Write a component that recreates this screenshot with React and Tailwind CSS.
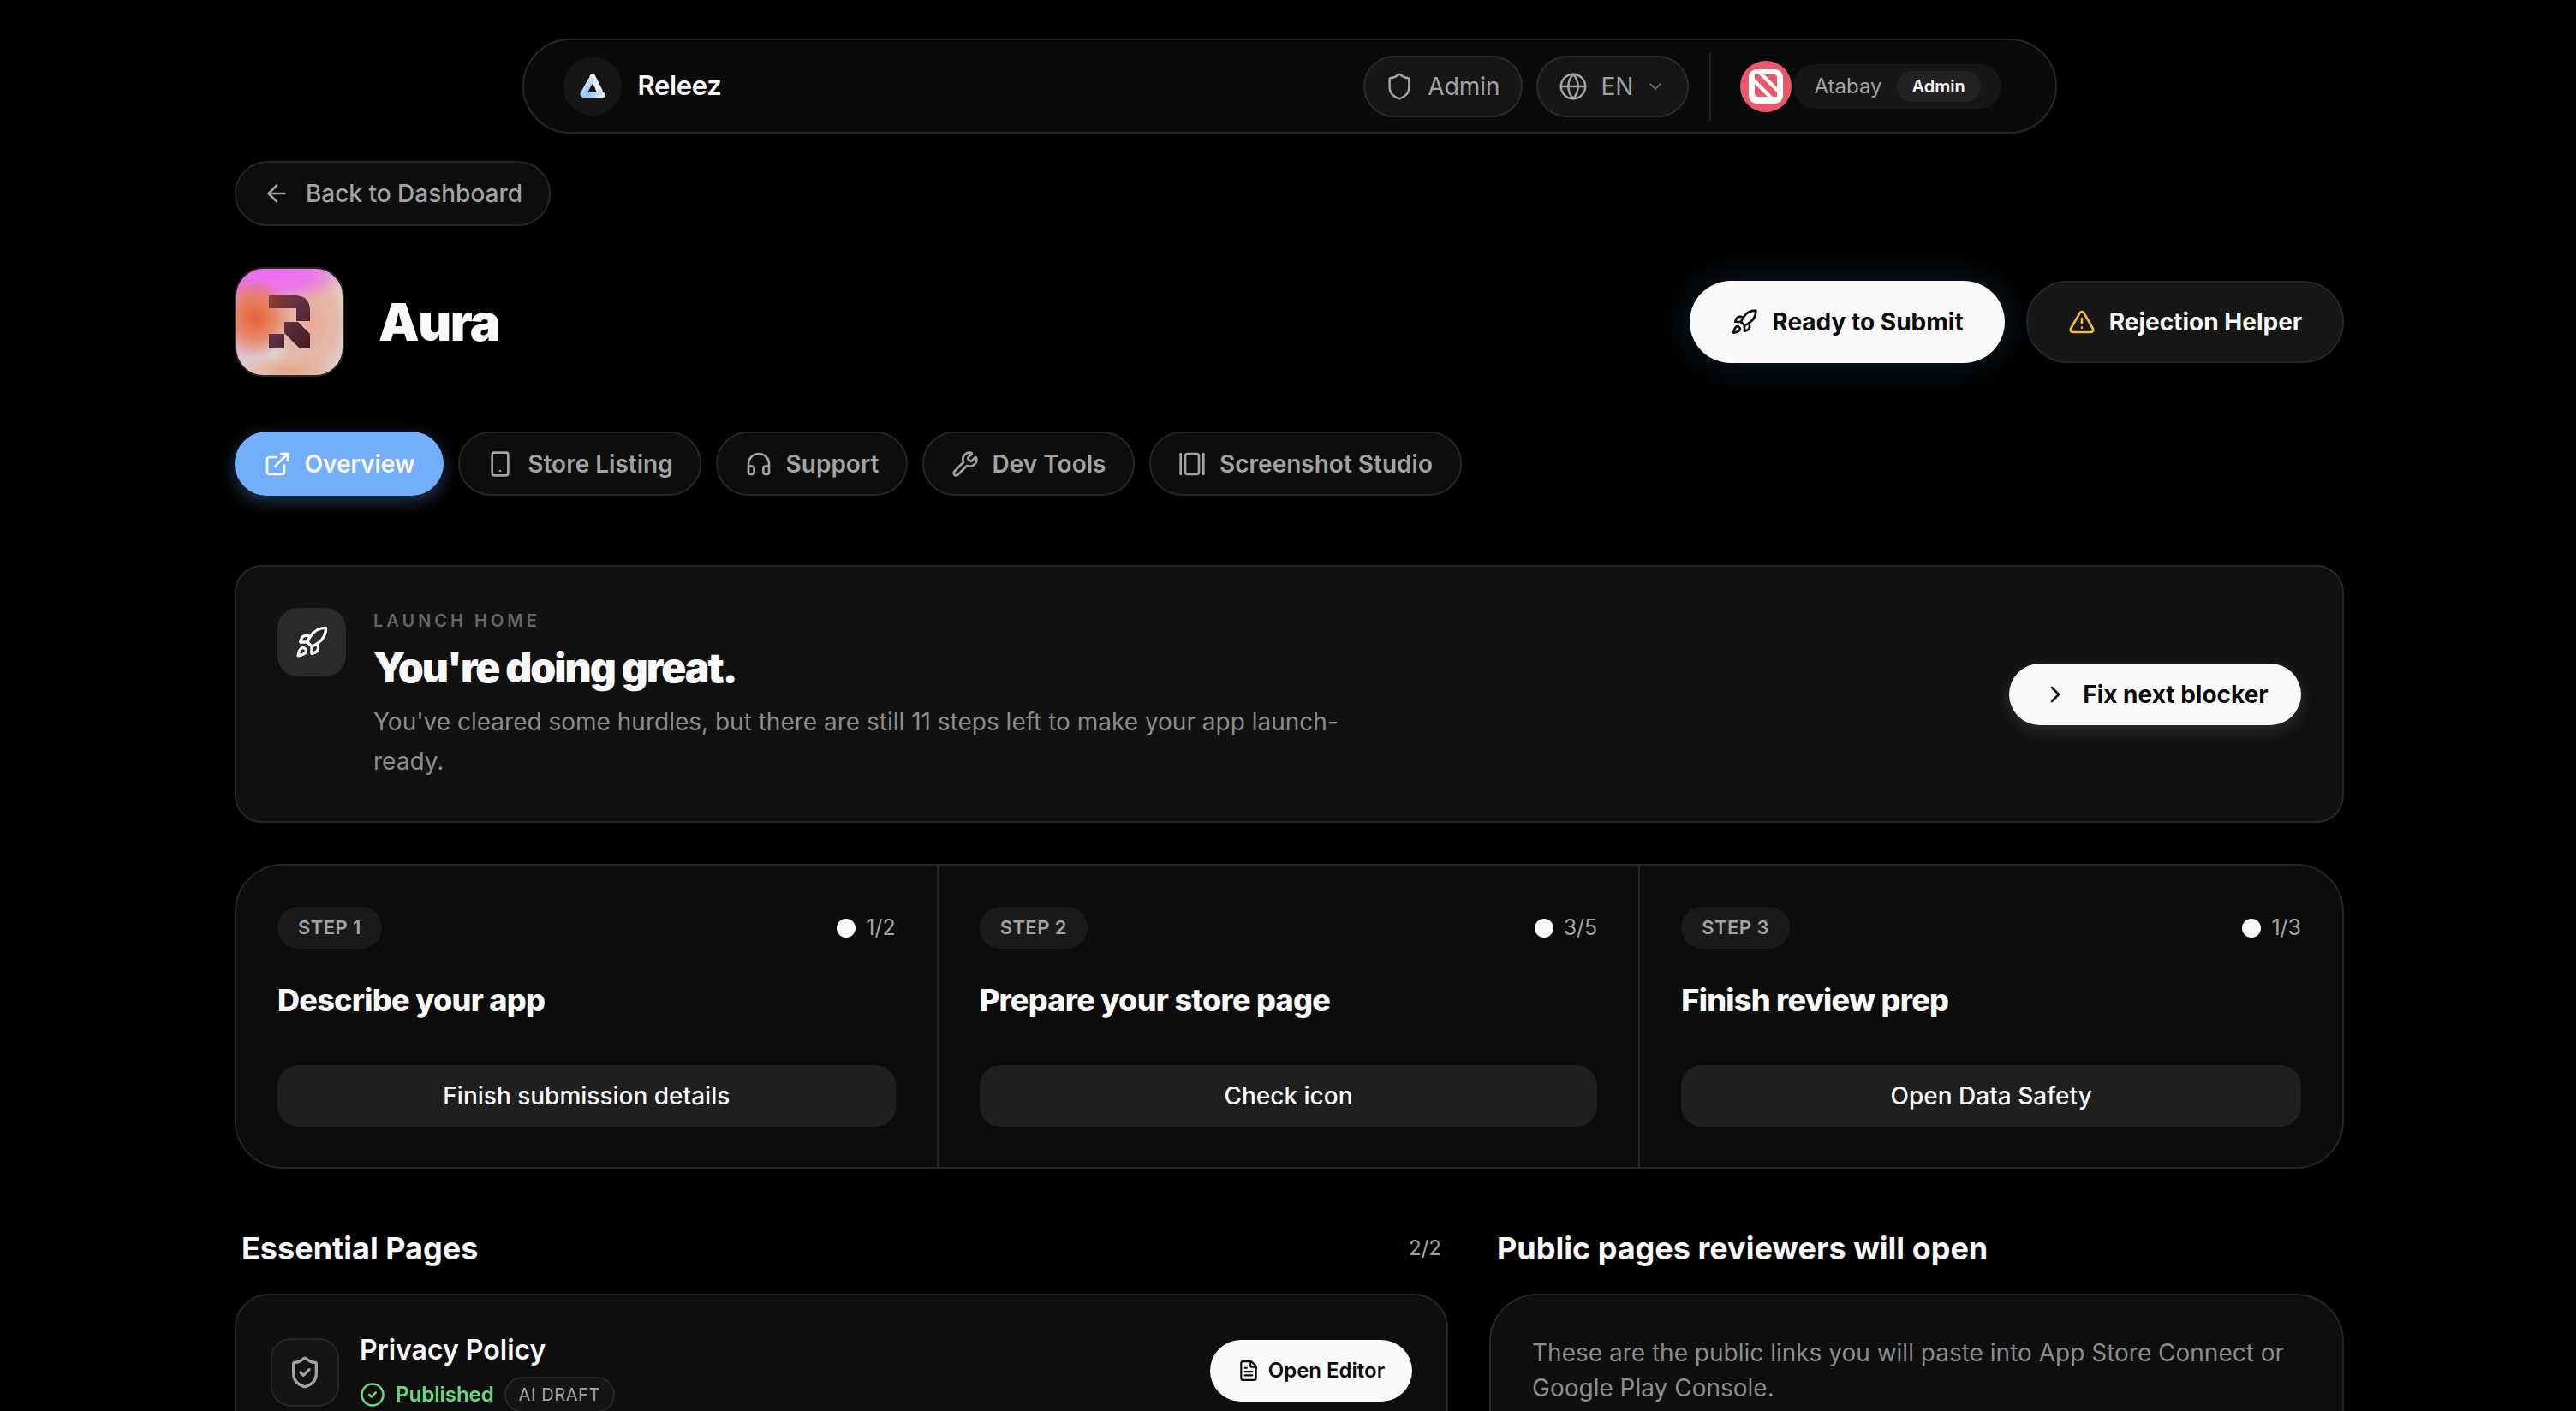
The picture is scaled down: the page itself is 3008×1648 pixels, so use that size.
import {
  ArrowLeft,
  ChevronDown,
  ChevronRight,
  CircleCheck,
  ExternalLink,
  FileText,
  GalleryHorizontal,
  Globe,
  Headphones,
  Rocket,
  Shield,
  ShieldCheck,
  Smartphone,
  TriangleAlert,
  Wrench,
} from 'lucide-react';

const TABS = [
  ['Store Listing', Smartphone, 'w-[284px]'],
  ['Support', Headphones, 'w-[224px]'],
  ['Dev Tools', Wrench, 'w-[248px]'],
  ['Screenshot Studio', GalleryHorizontal, 'w-[365px]'],
];

const STEPS = [
  ['STEP 1', '1/2', 'Describe your app', 'Finish submission details'],
  ['STEP 2', '3/5', 'Prepare your store page', 'Check icon'],
  ['STEP 3', '1/3', 'Finish review prep', 'Open Data Safety'],
];

function ReleezLogo() {
  return (
    <svg width="32" height="30" viewBox="0 0 32 30" fill="none">
      <defs>
        <linearGradient id="rl" gradientUnits="userSpaceOnUse" x1="4" y1="2" x2="30" y2="28">
          <stop offset="0" stopColor="#ffffff" />
          <stop offset="0.55" stopColor="#8fc2ff" />
          <stop offset="1" stopColor="#eef5ff" />
        </linearGradient>
      </defs>
      <path d="M16 4 L24 20" stroke="#e8f2ff" strokeWidth="7" strokeLinecap="round" />
      <path d="M14 8 L5 24" stroke="url(#rl)" strokeWidth="7" strokeLinecap="round" />
      <path d="M6 25 H28" stroke="url(#rl)" strokeWidth="6" strokeLinecap="round" />
      <circle cx="16" cy="18" r="3" fill="#161616" />
    </svg>
  );
}

function AppleNewsLogo() {
  return (
    <svg width="40" height="40" viewBox="0 0 40 40">
      <rect x="0" y="0" width="40" height="40" rx="9" fill="#fff" />
      <path d="M7 6 L12 6 L33 27 L33 32 L28 32 L7 11 Z M18 6 L29 6 Q33 6 33 10 L33 21 Z M7 17 L22 32 L11 32 Q7 32 7 28 Z" fill="#e85a6b" />
    </svg>
  );
}

function AuraIcon() {
  return (
    <div className="w-[128px] h-[128px] shrink-0 rounded-[34px] border-2 border-[#2a2a2a] overflow-hidden flex items-center justify-center bg-[radial-gradient(ellipse_34%_38%_at_18%_46%,#e8633a_0%,rgba(232,120,70,0.75)_55%,rgba(232,140,90,0)_100%),radial-gradient(ellipse_75%_30%_at_30%_4%,#ec6ff0_0%,rgba(236,111,240,0.85)_55%,rgba(236,120,240,0)_100%),radial-gradient(ellipse_40%_60%_at_70%_50%,#e8ac98_0%,rgba(232,172,152,0.7)_60%,rgba(232,172,152,0)_100%),radial-gradient(ellipse_50%_18%_at_50%_96%,#e8a080_0%,rgba(232,160,128,0)_100%),linear-gradient(135deg,#e58fd8_0%,#dcd6d4_60%,#dcd8d6_100%)]">
      <svg width="52" height="66" viewBox="0 0 52 66">
        <defs>
          <linearGradient id="auraR" x1="0" y1="0" x2="1" y2="1">
            <stop offset="0" stopColor="#8d3f2c" />
            <stop offset="0.45" stopColor="#5f3040" />
            <stop offset="1" stopColor="#471b1e" />
          </linearGradient>
        </defs>
        <path
          d="M2 2 H32 Q50 2 50 20 V32 H34 V17 H2 Z M20 33 H36 L50 47 V64 H38 L20 46 Z M2 47 H20 V64 H2 Z"
          fill="url(#auraR)"
        />
      </svg>
    </div>
  );
}

function Topbar() {
  return (
    <div className="self-center w-[1792px] h-[111px] mt-[45px] shrink-0 rounded-full border-2 border-[#262626] bg-[#0a0a0a] flex items-center justify-between pl-[46px] pr-[63px]">
      <div className="flex items-center gap-[19px]">
        <div className="w-[68px] h-[68px] rounded-full bg-[#161616] flex items-center justify-center">
          <ReleezLogo />
        </div>
        <span className="text-[31px] font-semibold tracking-[-0.01em] text-[#fafafa]">Releez</span>
      </div>
      <div className="flex items-center">
        <div className="h-[72px] w-[186px] rounded-full border-2 border-[#2a2a2a] bg-[#161616] flex items-center justify-center gap-[16px] text-[#a3a3a3] text-[28px]">
          <Shield size={34} strokeWidth={1.75} />
          <span>Admin</span>
        </div>
        <div className="h-[72px] w-[178px] ml-[16px] rounded-full border-2 border-[#2a2a2a] bg-[#161616] flex items-center justify-center text-[#a3a3a3] text-[28px]">
          <Globe size={34} strokeWidth={1.75} />
          <span className="ml-[16px]">EN</span>
          <ChevronDown size={24} strokeWidth={1.75} className="ml-[14px] text-[#737373]" />
        </div>
        <div className="w-[2px] h-[80px] bg-[#1f1f1f] ml-[24px] mr-[34px]" />
        <div className="w-[60px] h-[60px] rounded-full bg-[#e85a6b] flex items-center justify-center">
          <AppleNewsLogo />
        </div>
        <div className="h-[52px] w-[243px] ml-[2px] rounded-full bg-[#161616] flex items-center pl-[25px]">
          <span className="text-[24px] text-[#a3a3a3]">Atabay</span>
          <span className="ml-[17px] h-[36px] w-[98px] rounded-full bg-[#222222] flex items-center justify-center text-[20px] font-semibold text-[#fafafa]">Admin</span>
        </div>
      </div>
    </div>
  );
}

function AppHeader() {
  return (
    <div className="mt-[48px] flex items-center justify-between">
      <div className="flex items-center gap-[40px]">
        <AuraIcon />
        <h1 className="text-[60px] font-black text-[#fafafa] tracking-[-0.025em]">Aura</h1>
      </div>
      <div className="flex items-center gap-[25px]">
        <button className="h-[96px] w-[368px] rounded-full bg-[#fafafa] flex items-center justify-center gap-[16px] text-[#0a0a0a] text-[28px] font-bold shadow-[0_0_40px_rgba(96,165,250,0.18)]">
          <Rocket size={32} strokeWidth={2} />
          Ready to Submit
        </button>
        <button className="h-[96px] w-[371px] rounded-full bg-[#161616] border-2 border-[#262626] flex items-center justify-center gap-[16px] text-[#fafafa] text-[28px] font-bold">
          <TriangleAlert size={32} strokeWidth={2} className="text-[#f5b942]" />
          Rejection Helper
        </button>
      </div>
    </div>
  );
}

function Tabs() {
  return (
    <div className="mt-[64px] flex items-center gap-[17px]">
      <button className="h-[75px] w-[244px] rounded-full bg-[#73aefb] flex items-center justify-center gap-[16px] text-[#fafafa] text-[28px] font-semibold shadow-[0_6px_20px_rgba(96,165,250,0.35)]">
        <ExternalLink size={32} strokeWidth={2} />
        Overview
      </button>
      {TABS.map(([label, Icon, width]) => (
        <button
          key={label}
          className={`h-[75px] ${width} rounded-full bg-[#0d0d0d] border-2 border-[#262626] flex items-center justify-center gap-[16px] text-[#a3a3a3] text-[28px] font-semibold`}
        >
          <Icon size={32} strokeWidth={2} />
          {label}
        </button>
      ))}
    </div>
  );
}

function LaunchCard() {
  return (
    <div className="mt-[81px] h-[301px] rounded-[32px] border-2 border-[#262626] bg-[#111111] flex items-center justify-between pl-[48px] pr-[48px]">
      <div className="flex items-start gap-[32px] self-start pt-[48px]">
        <div className="w-[80px] h-[80px] rounded-[24px] bg-[#2a2a2a] flex items-center justify-center shrink-0 text-[#fafafa]">
          <Rocket size={40} strokeWidth={2} />
        </div>
        <div className="w-[1152px]">
          <p className="text-[20px] leading-[30px] font-semibold tracking-[0.2em] text-[#666666]">LAUNCH HOME</p>
          <h2 className="mt-[10px] text-[48px] leading-[60px] font-black tracking-[-0.04em] text-[#fafafa]">You're doing great.</h2>
          <p className="mt-[10px] text-[28px] leading-[46px] text-[#8c8c8c]">
            You've cleared some hurdles, but there are still 11 steps left to make your app launch-ready.
          </p>
        </div>
      </div>
      <button className="h-[72px] w-[341px] rounded-full bg-[#fafafa] flex items-center justify-center gap-[16px] text-[#0a0a0a] text-[28px] font-bold shadow-[0_6px_20px_rgba(255,255,255,0.12)]">
        <ChevronRight size={32} strokeWidth={2} />
        Fix next blocker
      </button>
    </div>
  );
}

function StepsCard() {
  return (
    <div className="mt-[48px] h-[356px] rounded-[56px] border-2 border-[#262626] bg-[#0c0c0c] grid grid-cols-3 divide-x-2 divide-[#262626] overflow-hidden">
      {STEPS.map(([step, count, title, action]) => (
        <div key={step} className="flex flex-col px-[48px] pt-[48px]">
          <div className="flex items-center justify-between">
            <span className="h-[49px] px-[24px] rounded-full bg-[#1a1a1a] flex items-center text-[22px] font-semibold tracking-[0.02em] text-[#a3a3a3]">{step}</span>
            <span className="flex items-center gap-[12px] text-[25px] text-[#a3a3a3]">
              <span className="w-[22px] h-[22px] rounded-full bg-[#fafafa]" />
              {count}
            </span>
          </div>
          <h3 className="mt-[36px] text-[36px] leading-[48px] font-extrabold tracking-[-0.02em] text-[#fafafa]">{title}</h3>
          <button className="mt-[52px] h-[72px] rounded-[24px] bg-[#1f1f1f] text-[28px] font-medium text-[#fafafa]">{action}</button>
        </div>
      ))}
    </div>
  );
}

function BottomSection() {
  return (
    <div className="mt-[67px] grid grid-cols-[1417px_998px] gap-x-[48px]">
      <div>
        <div className="flex items-center justify-between pl-[8px] pr-[8px] h-[52px]">
          <h2 className="text-[36px] font-bold text-[#fafafa]">Essential Pages</h2>
          <span className="text-[24px] text-[#a3a3a3]">2/2</span>
        </div>
        <div className="mt-[27px] h-[200px] rounded-[40px] border-2 border-[#262626] bg-[#0e0e0e] pl-[40px] pr-[40px] pt-[50px] flex items-start justify-between">
          <div className="flex items-start gap-[24px]">
            <div className="w-[80px] h-[80px] rounded-[24px] border-2 border-[#262626] bg-[#141414] flex items-center justify-center text-[#a3a3a3]">
              <ShieldCheck size={40} strokeWidth={2} />
            </div>
            <div className="-mt-[8px]">
              <p className="text-[32px] leading-[44px] font-semibold text-[#fafafa]">Privacy Policy</p>
              <div className="mt-[9px] flex items-center">
                <CircleCheck size={30} strokeWidth={2} className="text-[#6ad683]" />
                <span className="ml-[12px] text-[24px] font-semibold text-[#6ad683]">Published</span>
                <span className="ml-[12px] h-[42px] w-[129px] rounded-full border-2 border-[#262626] bg-[#141414] flex items-center justify-center text-[20px] tracking-[0.03em] text-[#a3a3a3]">AI DRAFT</span>
              </div>
            </div>
          </div>
          <button className="mt-[2px] h-[72px] w-[236px] rounded-full bg-[#fafafa] flex items-center justify-center gap-[10px] text-[#0a0a0a] text-[24px] font-semibold">
            <FileText size={26} strokeWidth={2} />
            Open Editor
          </button>
        </div>
      </div>
      <div>
        <div className="flex items-center pl-[9px] h-[52px]">
          <h2 className="text-[36px] font-bold text-[#fafafa]">Public pages reviewers will open</h2>
        </div>
        <div className="mt-[27px] h-[200px] rounded-[56px] border-2 border-[#262626] bg-[#0e0e0e] pl-[48px] pr-[48px] pt-[47px]">
          <p className="text-[28px] leading-[41px] text-[#8c8c8c]">
            These are the public links you will paste into App Store Connect or Google Play Console.
          </p>
        </div>
      </div>
    </div>
  );
}

export default function App() {
  return (
    <div className="w-[3008px] h-[1648px] overflow-hidden bg-black font-['Inter',sans-serif]">
      <div className="ml-[274px] w-[2463px] flex flex-col">
        <Topbar />
        <button className="mt-[32px] h-[76px] w-[369px] rounded-full border-2 border-[#262626] bg-[#0d0d0d] flex items-center justify-center gap-[18px] text-[#a3a3a3] text-[28px] font-medium">
          <ArrowLeft size={32} strokeWidth={2} />
          Back to Dashboard
        </button>
        <AppHeader />
        <Tabs />
        <LaunchCard />
        <StepsCard />
        <BottomSection />
      </div>
    </div>
  );
}
